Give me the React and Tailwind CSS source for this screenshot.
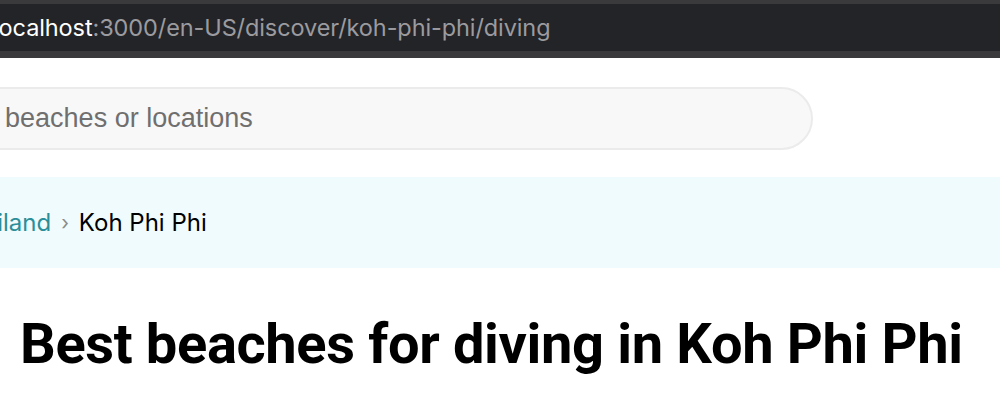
import React from "react";

const App = () => {
	return (
		<div className="w-[1000px] h-[413px] overflow-hidden bg-white">
			{/* browser address bar */}
			<div className="h-[58px] bg-[#3a3a3c] pt-[4px] pb-[7px]">
				<div className="h-full bg-[#232428] flex items-center overflow-hidden">
					<p className="ml-[-7px] whitespace-nowrap text-[23.5px] font-['Inter',sans-serif] tracking-[-0.1px]">
						<span className="text-white">localhost</span>
						<span className="text-[#9b9b9f]">:3000/en-US/discover/koh-phi-phi/diving</span>
					</p>
				</div>
			</div>

			{/* search */}
			<div className="h-[119px] pt-[29px] overflow-hidden">
				<div className="ml-[-300px] w-[1113px] h-[63px] rounded-full bg-[#f8f8f8] border-2 border-[#ebebeb] flex items-center">
					<p className="ml-[210px] whitespace-nowrap text-[27px] text-[#6f6f6f] font-['Liberation_Sans',Arial,sans-serif]">
						Search beaches or locations
					</p>
				</div>
			</div>

			{/* breadcrumb */}
			<div className="h-[91px] bg-[#f0fbfd] flex items-center overflow-hidden">
				<div className="ml-[-46px] flex items-center gap-[10px] whitespace-nowrap text-[24px] font-['Inter',sans-serif]">
					<span className="text-[#2b8e98]">Thailand</span>
					<span className="text-[#8a8a8a] text-[20px]">›</span>
					<span className="text-black">Koh Phi Phi</span>
				</div>
			</div>

			{/* heading */}
			<h1 className="pl-[20px] pt-[42px] text-[56px] leading-[68px] font-bold text-black font-['Roboto',sans-serif] whitespace-nowrap tracking-[-0.35px]">
				Best beaches for diving in Koh Phi Phi
			</h1>
		</div>
	);
};

export default App;
